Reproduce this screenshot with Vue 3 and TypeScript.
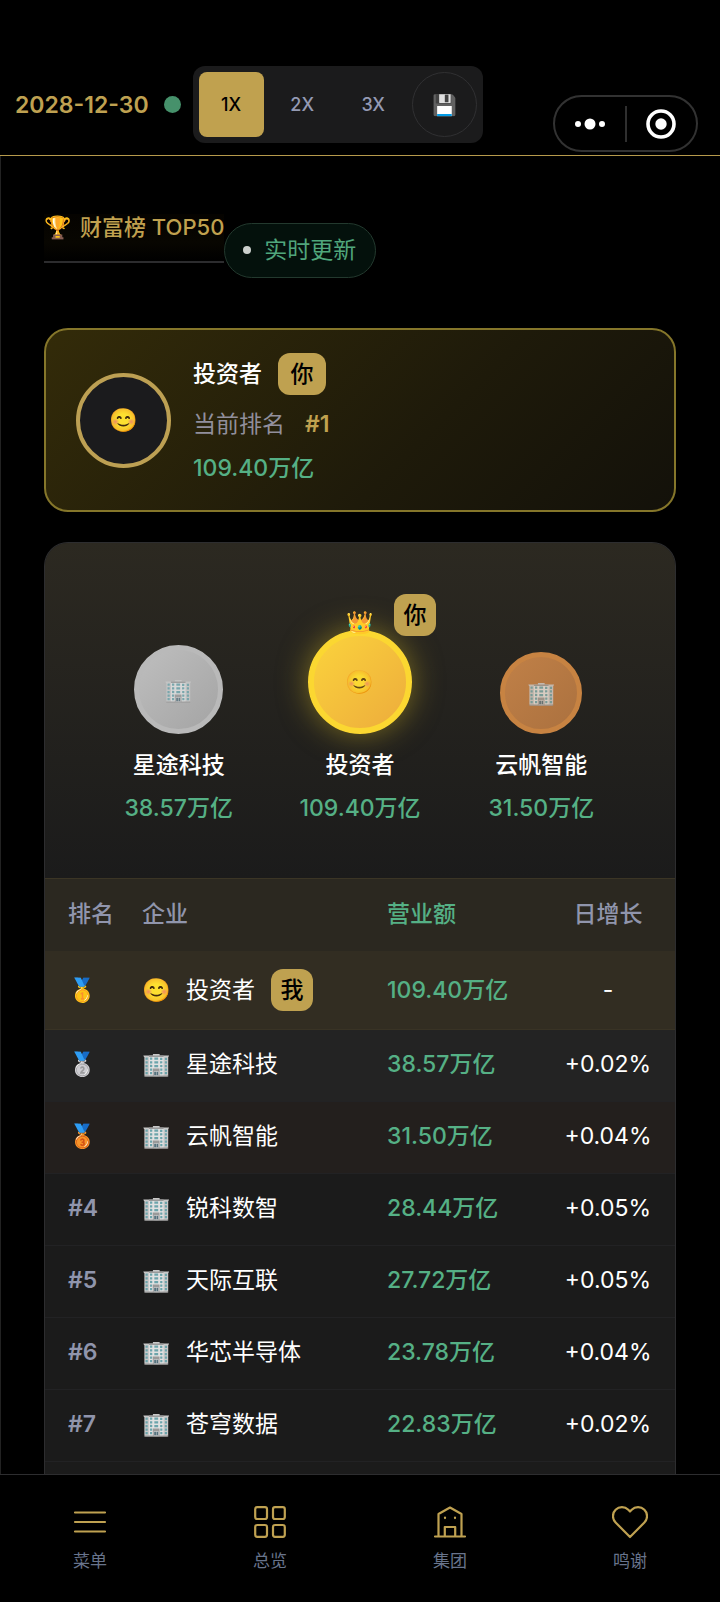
<script setup lang="ts">
import { ref } from 'vue'

interface Company {
  rank: string
  icon: string
  name: string
  revenue: string
  growth: string
  tone: string
  me?: boolean
}

const speeds = ['1X', '2X', '3X']
const speed = ref('1X')

const podium = [
  { tone: 'silver', icon: '🏢', name: '星途科技', revenue: '38.57万亿' },
  { tone: 'gold', icon: '😊', name: '投资者', revenue: '109.40万亿' },
  { tone: 'bronze', icon: '🏢', name: '云帆智能', revenue: '31.50万亿' },
]

const companies: Company[] = [
  { rank: '🥇', icon: '😊', name: '投资者', revenue: '109.40万亿', growth: '-', tone: 'first', me: true },
  { rank: '🥈', icon: '🏢', name: '星途科技', revenue: '38.57万亿', growth: '+0.02%', tone: 'second' },
  { rank: '🥉', icon: '🏢', name: '云帆智能', revenue: '31.50万亿', growth: '+0.04%', tone: 'third' },
  { rank: '#4', icon: '🏢', name: '锐科数智', revenue: '28.44万亿', growth: '+0.05%', tone: '' },
  { rank: '#5', icon: '🏢', name: '天际互联', revenue: '27.72万亿', growth: '+0.05%', tone: '' },
  { rank: '#6', icon: '🏢', name: '华芯半导体', revenue: '23.78万亿', growth: '+0.04%', tone: '' },
  { rank: '#7', icon: '🏢', name: '苍穹数据', revenue: '22.83万亿', growth: '+0.02%', tone: '' },
]
</script>

<template>
  <div class="app">
    <header class="topbar">
      <time class="date" datetime="2028-12-30">2028-12-30</time>
      <span class="status"></span>
      <div class="speeds">
        <button v-for="s in speeds" :key="s" type="button" class="speed" :class="{ active: s === speed }" @click="speed = s">{{ s }}</button>
        <button type="button" class="save">💾</button>
      </div>
      <div class="capsule">
        <button type="button" aria-label="更多">
          <svg width="32" height="12" viewBox="0 0 32 12" fill="#fff"><circle cx="4" cy="6" r="3" /><circle cx="16" cy="6" r="5.5" /><circle cx="28" cy="6" r="3" /></svg>
        </button>
        <i class="divider"></i>
        <button type="button" aria-label="关闭">
          <svg width="30" height="30" viewBox="0 0 30 30"><circle cx="15" cy="15" r="13" fill="none" stroke="#fff" stroke-width="3.6" /><circle cx="15" cy="15" r="5.7" fill="#fff" /></svg>
        </button>
      </div>
    </header>

    <main class="content">
      <div class="heading">
        <h1 class="title"><span class="trophy">🏆</span>财富榜 TOP50</h1>
        <span class="live"><i class="live-dot"></i>实时更新</span>
      </div>

      <section class="me-card">
        <div class="me-avatar">😊</div>
        <div class="me-info">
          <div class="me-name">投资者<span class="badge wide">你</span></div>
          <div class="me-rank">当前排名<b>#1</b></div>
          <div class="me-money">109.40万亿</div>
        </div>
      </section>

      <section class="board">
        <div class="podium">
          <div v-for="p in podium" :key="p.tone" class="place">
            <div class="disc" :class="p.tone">
              <span v-if="p.tone === 'gold'" class="crown">👑</span>
              <span class="face">{{ p.icon }}</span>
              <span v-if="p.tone === 'gold'" class="badge you">你</span>
            </div>
            <div class="place-name">{{ p.name }}</div>
            <div class="place-money">{{ p.revenue }}</div>
          </div>
        </div>

        <table class="ranking">
          <colgroup><col class="c-rank" /><col /><col class="c-money" /><col class="c-growth" /></colgroup>
          <thead>
            <tr><th scope="col" class="rank">排名</th><th scope="col">企业</th><th scope="col" class="money">营业额</th><th scope="col" class="growth">日增长</th></tr>
          </thead>
          <tbody>
            <tr v-for="c in companies" :key="c.rank" :class="c.tone">
              <td class="rank">{{ c.rank }}</td>
              <td>
                <div class="company"><span class="logo">{{ c.icon }}</span>{{ c.name }}<span v-if="c.me" class="badge">我</span></div>
              </td>
              <td class="money">{{ c.revenue }}</td>
              <td class="growth">{{ c.growth }}</td>
            </tr>
          </tbody>
        </table>
      </section>
    </main>

    <nav class="tabs">
      <a href="#menu">
        <svg viewBox="0 0 36 36"><path d="M3 8.500h30M3 18h30M3 27.500h30" /></svg>菜单
      </a>
      <a href="#overview">
        <svg viewBox="0 0 36 36"><rect x="3.2" y="3.2" width="11.8" height="11.8" rx="2" /><rect x="21" y="3.2" width="11.8" height="11.8" rx="2" /><rect x="3.2" y="21" width="11.8" height="11.8" rx="2" /><rect x="21" y="21" width="11.8" height="11.8" rx="2" /></svg>总览
      </a>
      <a href="#group">
        <svg viewBox="0 0 36 36"><path d="M3 32.500h30M6.500 32.500V10L18 3.500 29.500 10v22.500M12.800 32.500V23h10.400v9.500M13 13.500v.6M23 13.500v.6" /></svg>集团
      </a>
      <a href="#thanks">
        <svg viewBox="0 0 36 36"><path d="M18 33 3.600 18.500a9 9 0 0 1 0-12.700 9 9 0 0 1 12.700 0L18 7.500l1.700-1.700a9 9 0 0 1 12.700 0 9 9 0 0 1 0 12.700Z" /></svg>鸣谢
      </a>
    </nav>
  </div>
</template>

<style>
body { background: #000; }
</style>

<style scoped>
* { box-sizing: border-box; }
.app {
  display: flex;
  flex-direction: column;
  height: 100vh;
  overflow: hidden;
  background: #000;
  color: #fff;
  font: 23px/32px Inter, "Noto Sans CJK SC", sans-serif;
}
button { padding: 0; border: 0; background: none; color: inherit; font: inherit; }
.topbar {
  position: relative;
  flex: none;
  display: flex;
  align-items: center;
  padding: 66px 15px 12px;
  border-bottom: 1px solid #b69a4c;
}
.date { color: #bfa151; font-weight: 600; }
.status { width: 17px; height: 17px; margin: 0 12px 0 15px; border-radius: 50%; background: #46916b; }
.speeds { display: flex; gap: 6px; padding: 6px; border-radius: 12px; background: #1b1b1c; }
.speed, .save { width: 65px; height: 65px; border-radius: 8px; color: #949ab3; font-size: 18px; font-weight: 500; }
.speed.active { background: #c0a14f; color: #000; }
.save { border: 1px solid #303032; border-radius: 50%; font-size: 20px; }
.capsule {
  position: absolute;
  top: 95px;
  right: 22px;
  display: flex;
  align-items: center;
  width: 145px;
  height: 57px;
  border: 2px solid #323232;
  border-radius: 29px;
  background: #000;
}
.capsule button { flex: 1; display: flex; justify-content: center; }
.divider { width: 2px; height: 36px; background: #2f2f2f; }

.content {
  flex: 1;
  min-height: 0;
  display: flex;
  flex-direction: column;
  padding: 58px 44px 0 43px;
  border-left: 1px solid #222;
  overflow: hidden;
}
.heading { display: flex; align-items: flex-start; }
.title {
  height: 49px;
  margin: 0;
  padding-bottom: 17px;
  border-bottom: 2px solid #2c2c2e;
  background: linear-gradient(#050300, #080601 60%, #000);
  color: #c0a14f;
  font-size: 22px;
  line-height: 26px;
  font-weight: 500;
  white-space: nowrap;
}
.trophy { margin-right: 9px; }
.live {
  display: flex;
  align-items: center;
  height: 55px;
  margin-top: 9px;
  padding: 0 19px 2px 18px;
  border: 1px solid #23392e;
  border-radius: 28px;
  background: #04110c;
  color: #50a67c;
}
.live-dot { width: 8px; height: 8px; margin-right: 13px; border-radius: 50%; background: #ccd0cd; }

.me-card {
  display: flex;
  align-items: center;
  flex: none;
  gap: 22px;
  height: 184px;
  margin-top: 50px;
  padding: 0 30px;
  border: 2px solid #85762a;
  border-radius: 24px;
  background: linear-gradient(135deg, #332b09, #1e1a0a 60%, #13110a);
}
.me-avatar {
  display: grid;
  place-items: center;
  width: 95px;
  height: 95px;
  border: 4px solid #bda053;
  border-radius: 50%;
  background: #1b1b1d;
}
.me-info { padding-bottom: 4px; }
.me-name { display: flex; align-items: center; height: 42px; font-weight: 500; }
.me-rank { display: flex; gap: 20px; margin-top: 13px; color: #918f9c; }
.me-rank b { color: #c0a14f; font-weight: 600; }
.me-money { margin-top: 12px; color: #55b085; font-weight: 500; }
.badge {
  display: inline-grid;
  place-items: center;
  width: 42px;
  height: 42px;
  margin-left: 16px;
  border-radius: 12px;
  background: #bfa150;
  color: #000;
  font-weight: 500;
}
.badge.wide { width: 48px; }

.board {
  flex: 1;
  min-height: 0;
  margin-top: 30px;
  border: 1px solid #2d2d2f;
  border-bottom: 0;
  border-radius: 24px 24px 0 0;
  background: #1b1b1b;
  overflow: hidden;
}
.podium {
  display: grid;
  grid-template-columns: repeat(3, 1fr);
  align-items: end;
  height: 335px;
  padding: 0 43px 54px;
  background: linear-gradient(#2c2921, #1b1b1b);
  text-align: center;
}
.place-name { margin-top: 15px; font-weight: 500; }
.place-money { margin-top: 11px; color: #55b085; font-weight: 500; }
.disc { position: relative; display: grid; place-items: center; margin: 0 auto; border-radius: 50%; }
.silver { width: 89px; height: 89px; border: 5px solid #b9b9b9; background: linear-gradient(135deg, #bebebe, #a4a4a4); }
.gold { width: 104px; height: 104px; border: 6px solid #fbd731; background: linear-gradient(135deg, #fbd33c, #edac3c); box-shadow: 0 0 30px #c9ad2288; }
.bronze { width: 82px; height: 82px; border: 5px solid #c78342; background: linear-gradient(135deg, #c08047, #ab713f); }
.face { opacity: .8; }
.crown { position: absolute; top: -30px; left: 0; right: 0; font-size: 22px; }
.you { position: absolute; top: -42px; right: -30px; }

.ranking { width: 100%; border-collapse: collapse; table-layout: fixed; }
.c-rank { width: 97px; }
.c-money { width: 154px; }
.c-growth { width: 134px; }
th, td { height: 72px; padding: 0 0 4px; border-bottom: 1px solid #222224; text-align: left; font-weight: 400; white-space: nowrap; }
th { padding-bottom: 2px; border-top: 1px solid #3b3525; border-bottom: 0; background: #2b2820; color: #9095ac; font-weight: 500; }
.rank { padding-left: 23px; color: #9095ac; font-weight: 500; }
td.rank { font-weight: 600; }
.money { color: #55b085; font-weight: 500; }
.growth { text-align: center; }
.first td { height: 79px; padding-bottom: 0; background: #322d22; border-color: #393325; }
.second td { background: #232323; }
.third td { background: #231f1d; }
.company { display: flex; align-items: center; }
.logo { width: 44px; }

.tabs { flex: none; display: grid; grid-template-columns: repeat(4, 1fr); height: 128px; border-top: 1px solid #2d2d2f; background: #000; }
.tabs a {
  display: flex;
  flex-direction: column;
  align-items: center;
  gap: 9px;
  padding-top: 29px;
  color: #68748c;
  font-size: 17px;
  line-height: 24px;
  text-decoration: none;
}
.tabs svg { width: 36px; height: 36px; fill: none; stroke: #bfa151; stroke-width: 2.2; stroke-linecap: round; stroke-linejoin: round; }
</style>
